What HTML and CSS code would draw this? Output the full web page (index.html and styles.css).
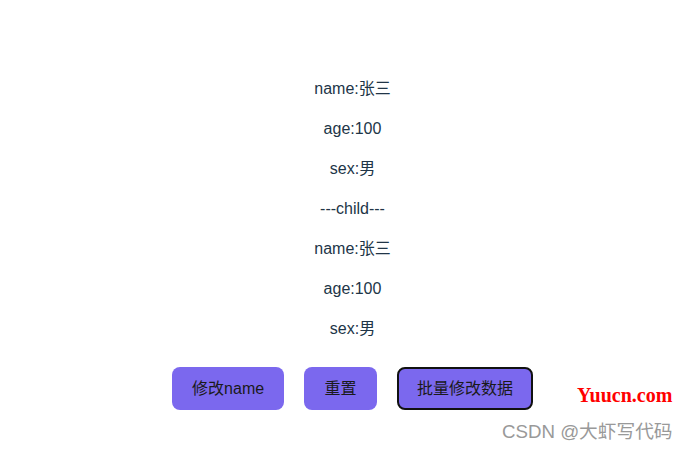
FILE: index.html
```html
<!DOCTYPE html>
<html lang="zh">
<head>
    <meta charset="UTF-8">
    <meta name="viewport" content="width=device-width, initial-scale=1.0">
    <title>demo</title>
    <link rel="stylesheet" href="styles.css">
</head>
<body>
    <div id="app">
        <p>name:张三</p>
        <p>age:100</p>
        <p>sex:男</p>
        <p>---child---</p>
        <p>name:张三</p>
        <p>age:100</p>
        <p>sex:男</p>
        <div class="btns">
            <button>修改name</button>
            <button>重置</button>
            <button class="active">批量修改数据</button>
        </div>
    </div>
    <div class="mark-site">Yuucn.com</div>
    <div class="mark-csdn">CSDN @大虾写代码</div>
</body>
</html>
```

FILE: styles.css
```css
body {
    margin: 0;
    font-family: "Liberation Sans", Arial, "Noto Sans CJK SC", sans-serif;
    font-size: 16px;
    line-height: 24px;
    color: #213547;
    background: #fff;
}
#app {
    text-align: center;
    padding: 61px 0 0 17px;
}
p { margin: 16px 0; }
.btns {
    display: flex;
    justify-content: center;
    gap: 20px;
    margin-top: 26px;
}
button {
    border-radius: 8px;
    border: 2px solid transparent;
    padding: 9.6px 18.2px;
    font-size: 16px;
    line-height: 20px;
    font-family: inherit;
    background: #7b68ee;
    color: #1a1a1a;
    cursor: pointer;
}
button.active { border-color: #111; }
.mark-site {
    position: absolute;
    left: 577px;
    top: 383px;
    font-family: "Liberation Serif", serif;
    font-weight: bold;
    font-size: 20px;
    color: #f00;
}
.mark-csdn {
    position: absolute;
    left: 502px;
    top: 420px;
    font-size: 18.7px;
    color: #999;
}
```
